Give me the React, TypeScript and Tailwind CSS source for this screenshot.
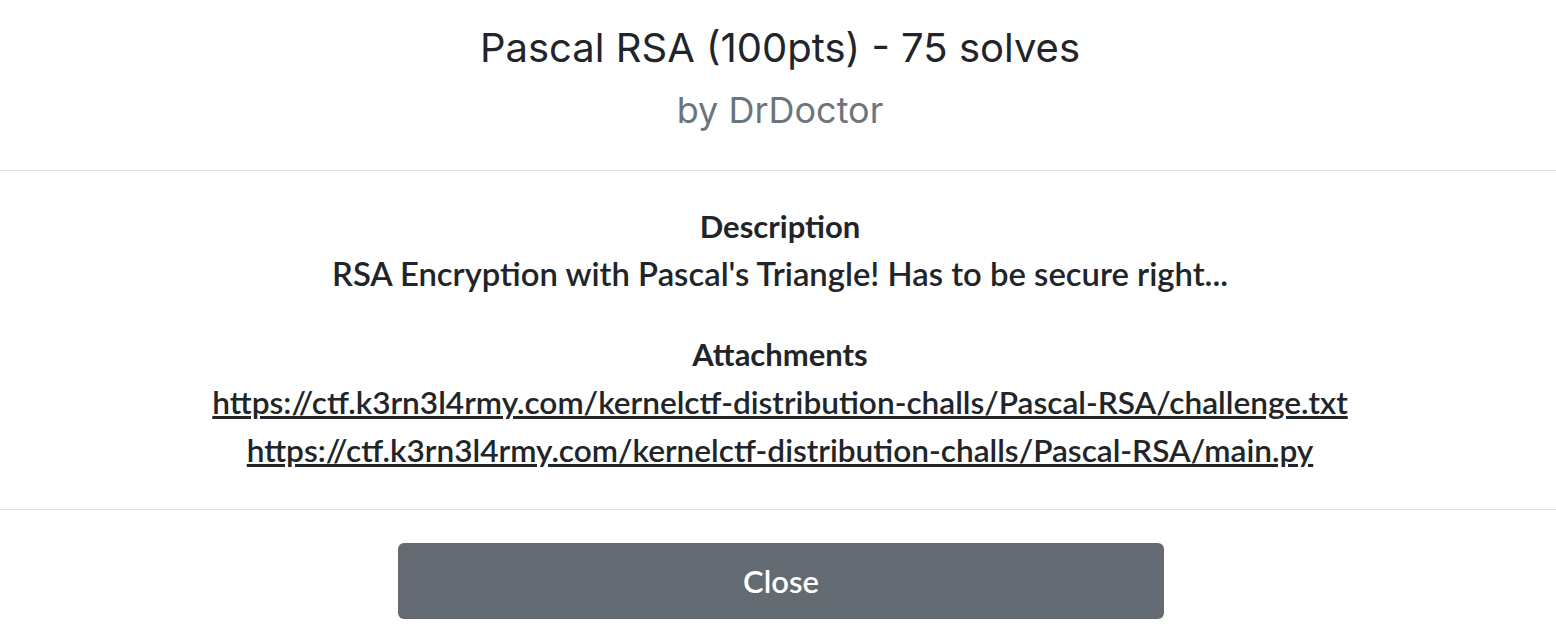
export default function App() {
  const links = [
    "https://ctf.k3rn3l4rmy.com/kernelctf-distribution-challs/Pascal-RSA/challenge.txt",
    "https://ctf.k3rn3l4rmy.com/kernelctf-distribution-challs/Pascal-RSA/main.py",
  ];
  return (
    <div className="w-[1556px] h-[638px] bg-white overflow-hidden">
      <div className="flex flex-col items-center pl-[4px] pt-[24px] pb-[40px] border-b border-[#dee2e6]" style={{ fontFamily: "Inter, sans-serif" }}>
        <h1 className="text-[40px] leading-[48px] text-[#212529] font-normal">Pascal RSA (100pts) - 75 solves</h1>
        <h2 className="mt-[18px] text-[36px] leading-[40px] text-[#6c757d] font-normal">by DrDoctor</h2>
      </div>
      <div className="flex flex-col items-center pl-[4px] pt-[31px] pb-[35px] border-b border-[#dee2e6] text-[#212529]" style={{ fontFamily: "Lato, sans-serif" }}>
        <div className="text-[31px] leading-[48px] font-bold">Description</div>
        <div className="text-[32.8px] leading-[48px] font-semibold">RSA Encryption with Pascal's Triangle! Has to be secure right...</div>
        <div className="mt-[32px] text-[31px] leading-[48px] font-bold">Attachments</div>
        {links.map((l) => (
          <a key={l} href={l} className="text-[31.6px] leading-[48px] font-semibold underline text-[#212529]">
            {l}
          </a>
        ))}
      </div>
      <div className="flex justify-center pl-[6px] pt-[33px]">
        <button className="w-[766px] h-[76px] rounded-[6px] bg-[#636a72] text-white text-[31px] font-semibold" style={{ fontFamily: "Lato, sans-serif" }}>
          Close
        </button>
      </div>
    </div>
  );
}
